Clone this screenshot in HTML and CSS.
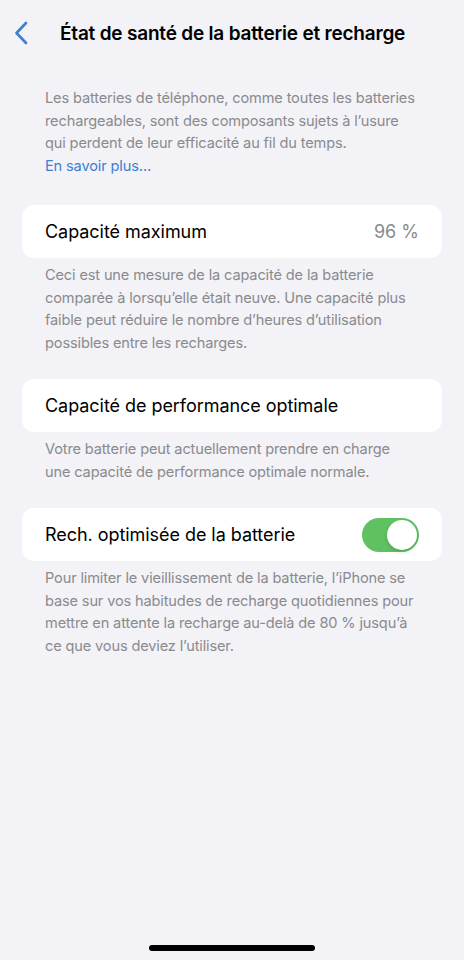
FILE: index.html
```html
<!DOCTYPE html>
<html lang="fr">
<head>
    <meta charset="UTF-8">
    <meta name="viewport" content="width=device-width, initial-scale=1.0">
    <title>État de santé de la batterie et recharge</title>
    <link rel="stylesheet" href="styles.css">
</head>
<body>

    <div class="screen">
        <div class="nav">
            <svg class="back" width="14" height="24" viewBox="0 0 14 24">
                <path d="M12 2 L2.5 12 L12 22" fill="none" stroke="currentColor" stroke-width="2.6" stroke-linecap="round" stroke-linejoin="round"/>
            </svg>
            <h1>État de santé de la batterie et recharge</h1>
        </div>

        <div class="content">
            <p class="intro">
                Les batteries de téléphone, comme toutes les batteries rechargeables, sont des composants sujets à l’usure qui perdent de leur efficacité au fil du temps.<br>
                <a href="#" class="link">En savoir plus…</a>
            </p>

            <div class="card">
                <span class="label">Capacité maximum</span>
                <span class="value">96 %</span>
            </div>
            <p class="footer">Ceci est une mesure de la capacité de la batterie comparée à lorsqu’elle était neuve. Une capacité plus faible peut réduire le nombre d’heures d’utilisation possibles entre les recharges.</p>

            <div class="card">
                <span class="label">Capacité de performance optimale</span>
            </div>
            <p class="footer">Votre batterie peut actuellement prendre en charge une capacité de performance optimale normale.</p>

            <div class="card">
                <span class="label">Rech. optimisée de la batterie</span>
                <div class="toggle on"><div class="knob"></div></div>
            </div>
            <p class="footer">Pour limiter le vieillissement de la batterie, l’iPhone se base sur vos habitudes de recharge quotidiennes pour mettre en attente la recharge au-delà de 80&nbsp;% jusqu’à ce que vous deviez l’utiliser.</p>
        </div>

        <div class="home-indicator"></div>
    </div>

</body>
</html>
```

FILE: styles.css
```css
* {
    box-sizing: border-box;
    margin: 0;
    padding: 0;
}
body {
    font-family: Inter, 'Noto Sans', sans-serif;
    background-color: #f2f2f7;
    color: #000;
}
.screen {
    display: flex;
    flex-direction: column;
    min-height: 960px;
}
.nav {
    height: 66px;
    display: flex;
    align-items: center;
}
.back {
    color: #3d7fd0;
    margin-left: 14px;
    flex-shrink: 0;
}
.nav h1 {
    margin-left: 32px;
    font-size: 19px;
    font-weight: 600;
    letter-spacing: -0.2px;
    white-space: nowrap;
}
.content {
    padding: 0 22px;
}
.intro {
    padding: 21px 25px 0 23px;
    margin-bottom: 28px;
    font-size: 14.6px;
    line-height: 22.5px;
    letter-spacing: -0.15px;
    color: #8a8a8e;
}
.link {
    color: #3d7fd0;
    text-decoration: none;
}
.card {
    height: 53px;
    background: #fff;
    border-radius: 12px;
    display: flex;
    align-items: center;
    justify-content: space-between;
    padding: 0 23px;
}
.label {
    font-size: 18px;
    letter-spacing: -0.05px;
}
.value {
    font-size: 18px;
    color: #8a8a8e;
}
.footer {
    padding: 6px 25px 0 23px;
    margin-bottom: 25px;
    font-size: 14.6px;
    line-height: 22.5px;
    letter-spacing: -0.15px;
    color: #8a8a8e;
}
.toggle {
    width: 57px;
    height: 34px;
    border-radius: 17px;
    background: #e9e9eb;
    padding: 2px;
    display: flex;
}
.toggle.on {
    background: #60c163;
    justify-content: flex-end;
}
.knob {
    width: 30px;
    height: 30px;
    border-radius: 50%;
    background: #fff;
    box-shadow: 0 2px 4px rgba(0, 0, 0, 0.15);
}
.home-indicator {
    margin: auto auto 9px;
    width: 166px;
    height: 6px;
    border-radius: 3px;
    background: #000;
}
```
